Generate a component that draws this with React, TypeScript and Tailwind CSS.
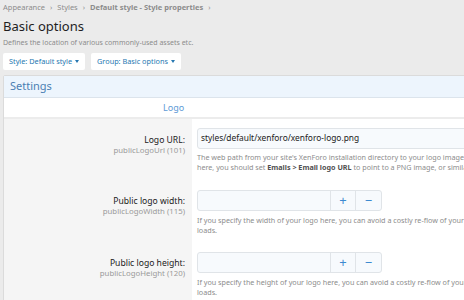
import React from "react";

function Caret() {
  return <span className="ml-[3px] inline-block align-middle border-x-[2.5px] border-x-transparent border-t-[3px] border-t-[#2577b1]" />;
}

function Spinner() {
  return (
    <div className="flex h-[21px] w-[185px] rounded-[3px] border border-[#e0e4e8] bg-[#f7fafd]">
      <div className="flex-1" />
      <div className="flex w-[25px] items-center justify-center border-l border-[#e0e4e8] text-[13px] text-[#3c8ad0]">+</div>
      <div className="flex w-[26px] items-center justify-center border-l border-[#e0e4e8] text-[13px] text-[#3c8ad0]">−</div>
    </div>
  );
}

export default function App() {
  return (
    <div className="h-[300px] w-[464px] overflow-hidden bg-[#ebebeb] px-[3px] text-[#141414]" style={{ fontFamily: '"Noto Sans", "Open Sans", sans-serif' }}>
      <div className="pt-[2px] text-[7.5px] leading-[11px] text-[#8c8c8c] whitespace-nowrap">
        Appearance <span className="mx-[3px]">›</span> Styles <span className="mx-[3px]">›</span>{" "}
        <span className="font-bold">Default style - Style properties</span> <span className="mx-[3px]">›</span>
      </div>
      <div className="mt-[4px] text-[13px] leading-[18px] text-[#1e1e1e]">Basic options</div>
      <div className="mt-[2px] text-[7px] leading-[11px] text-[#8c8c8c]">Defines the location of various commonly-used assets etc.</div>
      <div className="mt-[5px] flex gap-[6px]">
        <div className="flex h-[17px] items-center rounded-[2px] bg-white px-[6px] text-[7.3px] text-[#2577b1]">
          Style: Default style <Caret />
        </div>
        <div className="flex h-[17px] items-center rounded-[2px] bg-white px-[6px] text-[7.3px] text-[#2577b1]">
          Group: Basic options <Caret />
        </div>
      </div>
      <div className="mt-[5px] w-[640px] rounded-t-[2px] border border-[#dbdbdb] bg-white">
        <div className="flex h-[22px] items-center border-b border-[#dce4ec] bg-[#edf5fd] px-[6px] text-[11px] text-[#4b80b3]">Settings</div>
        <div className="flex h-[21px] items-center border-b-2 border-[#ececec] pl-[159px] text-[9px] text-[#5d9ad6]">Logo</div>
        <div className="grid grid-cols-[188px_1fr]">
          {/* Row 1 */}
          <div className="bg-[#f5f5f5] pr-[7px] pt-[15px] text-right">
            <div className="text-[8.6px] leading-[12px] text-[#222]">Logo URL:</div>
            <div className="text-[7.8px] leading-[9px] text-[#9a9a9a]">publicLogoUrl (101)</div>
          </div>
          <div className="pl-[5px] pt-[9px] pb-[18px]">
            <div className="flex h-[21px] items-center rounded-[3px] border border-[#e0e4e8] bg-[#f7fafd] px-[3px] text-[8.4px] text-[#222]">
              styles/default/xenforo/xenforo-logo.png
            </div>
            <div className="mt-[3px] whitespace-nowrap text-[7.2px] leading-[10px] text-[#8c8c8c]">
              The web path from your site's XenForo installation directory to your logo image. If you are using an SVG image
              <br />
              here, you should set <b className="text-[#505050]">Emails &gt; Email logo URL</b> to point to a PNG image, or similar.
            </div>
          </div>
          {/* Row 2 */}
          <div className="bg-[#f5f5f5] pr-[7px] pt-[5px] text-right">
            <div className="text-[8.6px] leading-[12px] text-[#222]">Public logo width:</div>
            <div className="text-[7.8px] leading-[9px] text-[#9a9a9a]">publicLogoWidth (115)</div>
          </div>
          <div className="pl-[5px] pb-[17px]">
            <Spinner />
            <div className="mt-[4px] whitespace-nowrap text-[7.2px] leading-[10px] text-[#8c8c8c]">
              If you specify the width of your logo here, you can avoid a costly re-flow of your page when the logo
              <br />
              loads.
            </div>
          </div>
          {/* Row 3 */}
          <div className="bg-[#f5f5f5] pr-[7px] pt-[5px] text-right">
            <div className="text-[8.6px] leading-[12px] text-[#222]">Public logo height:</div>
            <div className="text-[7.8px] leading-[9px] text-[#9a9a9a]">publicLogoHeight (120)</div>
          </div>
          <div className="pl-[5px] pb-[16px]">
            <Spinner />
            <div className="mt-[4px] whitespace-nowrap text-[7.2px] leading-[10px] text-[#8c8c8c]">
              If you specify the height of your logo here, you can avoid a costly re-flow of your page when the logo
              <br />
              loads.
            </div>
          </div>
        </div>
      </div>
    </div>
  );
}
